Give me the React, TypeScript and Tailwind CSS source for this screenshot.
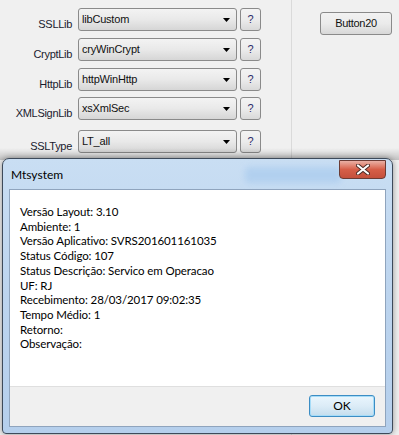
const rows = [
  { label: 'SSLLib', value: 'libCustom', mt: 'mt-[8px]' },
  { label: 'CryptLib', value: 'cryWinCrypt', mt: 'mt-[7px]' },
  { label: 'HttpLib', value: 'httpWinHttp', mt: 'mt-[7px]' },
  { label: 'XMLSignLib', value: 'xsXmlSec', mt: 'mt-[6px]' },
  { label: 'SSLType', value: 'LT_all', mt: 'mt-[10px]' },
];

const info = [
  'Versão Layout: 3.10',
  'Ambiente: 1',
  'Versão Aplicativo: SVRS201601161035',
  'Status Código: 107',
  'Status Descrição: Servico em Operacao',
  'UF: RJ',
  'Recebimento: 28/03/2017 09:02:35',
  'Tempo Médio: 1',
  'Retorno:',
  'Observação:',
];

function ComboRow({ label, value, mt }: { label: string; value: string; mt: string }) {
  return (
    <div className={`flex items-start ${mt}`}>
      <span className="h-[23px] w-[72px] pt-[9px] text-right text-[11px] leading-[15px] tracking-[-0.3px] text-[#1a1a2e]">
        {label}
      </span>
      <div className="ml-[6px] flex h-[23px] w-[159px] items-center rounded-[3px] border border-[#8a8a8a] bg-gradient-to-b from-[#f3f3f3] via-[#e9e9e9] to-[#d6d6d6] pl-[3px] pr-[5px]">
        <span className="flex-1 text-[11px] tracking-[-0.2px] text-[#111]">{value}</span>
        <svg width="8" height="4" viewBox="0 0 8 4">
          <path d="M0 0h7l-3.5 4z" fill="#000" />
        </svg>
      </div>
      <div className="ml-[3px] flex h-[23px] w-[21px] items-center justify-center rounded-[3px] border border-[#8a8a8a] bg-gradient-to-b from-[#f3f3f3] via-[#ececec] to-[#d9d9d9] text-[11px] text-[#2a2a6a]">
        ?
      </div>
    </div>
  );
}

export default function App() {
  return (
    <div className="relative h-[435px] w-[399px] overflow-hidden bg-[#f0f0f0] font-['Liberation_Sans',Arial,sans-serif]">
      <div className="flex h-full">
        <div className="flex w-[292px] flex-col border-r border-[#dadada]">
          {rows.map((r) => (
            <ComboRow key={r.label} {...r} />
          ))}
        </div>
        <div className="flex-1 pl-[28px] pt-[12px]">
          <div className="flex h-[23px] w-[72px] items-center justify-center rounded-[3px] border border-[#8a8a8a] bg-gradient-to-b from-[#f2f2f2] via-[#ebebeb] to-[#d8d8d8] text-[11px] tracking-[-0.3px] text-[#111]">
            Button20
          </div>
        </div>
      </div>

      {/* shadow above dialog */}
      <div className="absolute left-0 top-[148px] h-[12px] w-[399px] bg-gradient-to-b from-transparent to-[#00000030]" />

      {/* Mtsystem dialog */}
      <div className="absolute left-[2px] top-[158px] flex h-[276px] w-[391px] flex-col rounded-t-[7px] rounded-b-[4px] border border-[#3d4a5a] bg-gradient-to-b from-[#c9def3] via-[#bcd4ee] to-[#b5cfec] px-[6px] pb-[6px] font-['Lato',sans-serif] shadow-[0_0_6px_rgba(0,0,0,0.4)]">
        <div className="relative flex h-[30px] items-center">
          <span className="pl-[2px] pt-[2px] text-[12px] text-black">Mtsystem</span>
          <div className="absolute left-[236px] top-[8px] h-[16px] w-[96px] rounded-[4px] bg-[#a9cbee] opacity-70 blur-[3px]" />
          <div className="absolute right-[0px] top-[1px] flex h-[19px] w-[47px] items-center justify-center rounded-b-[4px] border border-[#6b3b34] bg-gradient-to-b from-[#e9b0a5] via-[#d65e48] to-[#c4503c]">
            <svg width="14" height="11" viewBox="0 0 14 11">
              <path d="M2 1.5L12 9.5M12 1.5L2 9.5" stroke="#4a2a25" strokeWidth="4" strokeLinecap="round" />
              <path d="M2 1.5L12 9.5M12 1.5L2 9.5" stroke="#fff" strokeWidth="2.2" strokeLinecap="round" />
            </svg>
          </div>
        </div>
        <div className="flex flex-1 flex-col border border-[#8fa4bd]">
          <div className="flex h-[196px] flex-col bg-white pl-[10px] pt-[15px] text-[11.5px] leading-[14.7px] tracking-[-0.1px] text-black">
            {info.map((line) => (
              <div key={line}>{line}</div>
            ))}
          </div>
          <div className="flex flex-1 items-start justify-end border-t border-[#dfdfdf] bg-[#f0f0f0] pr-[10px] pt-[8px]">
            <div className="flex h-[22px] w-[66px] items-center justify-center rounded-[3px] border border-[#3c8dc4] bg-gradient-to-b from-[#eaf6fd] via-[#dcecf7] to-[#c4dded] text-[12px] text-black shadow-[inset_0_0_0_1px_#a6dcf8]">
              OK
            </div>
          </div>
        </div>
      </div>
    </div>
  );
}
